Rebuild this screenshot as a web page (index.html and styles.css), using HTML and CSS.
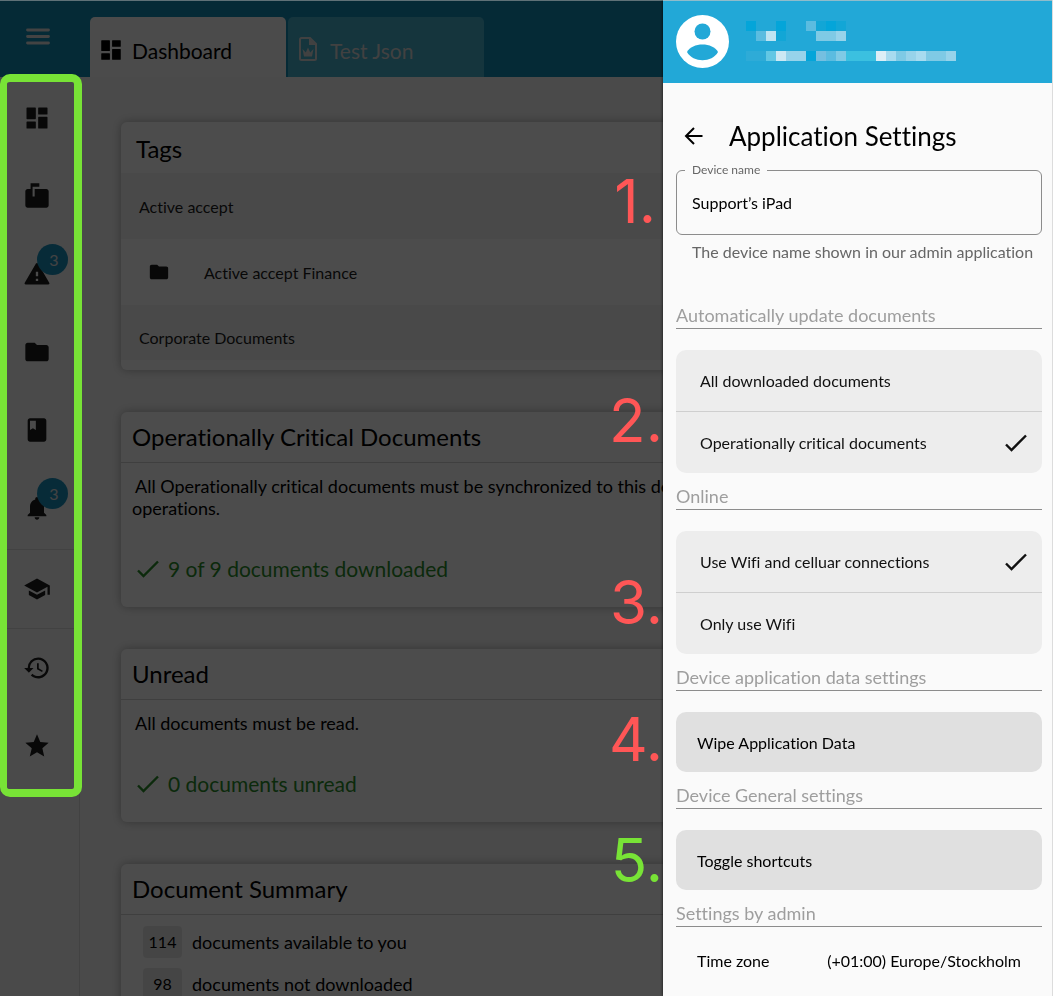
FILE: index.html
```html
<!DOCTYPE html>
<html lang="en">
<head>
    <meta charset="UTF-8">
    <meta name="viewport" content="width=device-width, initial-scale=1.0">
    <title>Application Settings</title>
    <link rel="stylesheet" href="styles.css">
</head>
<body>

    <!-- Shared icons -->
    <svg class="sprite" aria-hidden="true">
        <symbol id="dashboard" viewBox="0 0 24 24"><path d="M3.500 3h7q.5 0 .5.5v9q0 .5-.5.500h-7q-.5 0-.5-.5v-9q0-.5.5-.5zM3.500 15h7q.5 0 .5.5v5q0 .5-.5.500h-7q-.5 0-.5-.5v-5q0-.5.5-.5zM13.500 11h7q.5 0 .5.5v9q0 .5-.5.500h-7q-.5 0-.5-.5v-9q0-.5.5-.5zM13.500 3h7q.5 0 .5.5v5q0 .5-.5.500h-7q-.5 0-.5-.5v-5q0-.5.5-.5z"/></symbol>
        <symbol id="folder" viewBox="0 0 24 24"><path d="M10 4H4c-1.100 0-2 .9-2 2v12c0 1.100.9 2 2 2h16c1.100 0 2-.9 2-2V8c0-1.100-.9-2-2-2h-8l-2-2z"/></symbol>
        <symbol id="check" viewBox="0 0 24 24"><path d="M2 13.500l5.500 5.500L22 4.500" fill="none" stroke="currentColor" stroke-width="2.400"/></symbol>
    </svg>

    <div class="app">
        <header class="topbar">
            <button class="menu-btn" aria-label="Menu">
                <svg width="24" height="18" viewBox="0 0 24 18"><path d="M1.500 2h21M1.500 8.500h21M1.500 15h21" stroke="currentColor" stroke-width="2.800" stroke-linecap="round"/></svg>
            </button>
            <nav class="tabs">
                <button class="tab active"><svg width="26" height="26"><use href="#dashboard"/></svg>Dashboard</button>
                <button class="tab">
                    <svg width="26" height="28" viewBox="0 0 26 28"><path d="M5.500 2H14l6 6v14.500q0 1.500-1.500 1.500h-13Q4 24 4 22.500v-19Q4 2 5.500 2z" fill="none" stroke="currentColor" stroke-width="2"/><path d="M13 2v7h7zM6.500 13l3.300 3.500L12 11.500l2.200 5 3.300-3.500-1.500 7.500H8z"/></svg>
                    Test Json
                </button>
            </nav>
        </header>

        <aside class="sidebar">
            <div class="side-group first">
                <button class="side-btn" aria-label="Dashboard"><svg><use href="#dashboard"/></svg></button>
                <button class="side-btn" aria-label="Inbox"><svg viewBox="0 0 24 24"><path d="M20 6H10v6.500H8.200V4H14V1H6.500v5H4c-1.100 0-2 .9-2 2v12c0 1.100.9 2 2 2h16c1.100 0 2-.9 2-2V8c0-1.100-.9-2-2-2z"/></svg></button>
                <button class="side-btn" aria-label="Alerts"><svg viewBox="0 0 24 24"><path d="M2.300 21h19.400c.8 0 1.200-.8.8-1.500L12.900 3c-.4-.7-1.400-.7-1.800 0L1.500 19.500c-.4.7 0 1.500.8 1.500zM13 18h-2v-2h2v2zm0-4h-2v-4h2v4z"/></svg><span class="badge">3</span></button>
                <button class="side-btn" aria-label="Folders"><svg><use href="#folder"/></svg></button>
                <button class="side-btn" aria-label="Library"><svg viewBox="0 0 24 24"><path d="M18 2H6c-1.100 0-2 .9-2 2v16c0 1.100.9 2 2 2h12c1.100 0 2-.9 2-2V4c0-1.100-.9-2-2-2zM6 4h5v8l-2.500-1.500L6 12V4z"/></svg></button>
                <button class="side-btn" aria-label="Notifications"><svg viewBox="0 0 24 24"><path d="M12 22c1.100 0 2-.9 2-2h-4c0 1.100.9 2 2 2zm6-6v-5c0-3.100-1.600-5.600-4.500-6.300V4c0-.8-.7-1.500-1.500-1.500s-1.500.7-1.500 1.500v.7C7.600 5.400 6 7.900 6 11v5l-2 2v1h16v-1l-2-2z"/></svg><span class="badge">3</span></button>
            </div>
            <div class="side-group">
                <button class="side-btn" aria-label="Training"><svg viewBox="0 0 24 24"><path d="M5 13.200v4L12 21l7-3.800v-4L12 17l-7-3.800zM12 3L1 9l11 6 9-4.900V17h2V9L12 3z"/></svg></button>
            </div>
            <div class="side-group last">
                <button class="side-btn" aria-label="History"><svg viewBox="0 0 24 24"><path d="M13 3a9 9 0 0 0-9 9H1l3.900 3.900.1.100L9 12H6a7 7 0 1 1 2.100 4.900l-1.400 1.500A9 9 0 1 0 13 3zm-1 5v5l4.300 2.500.7-1.200-3.500-2.100V8z"/></svg></button>
                <button class="side-btn" aria-label="Favorites"><svg viewBox="0 0 24 24"><path d="M12 17.300l6.200 3.700-1.600-7L22 9.200l-7.200-.6L12 2 9.200 8.600 2 9.200 7.500 14l-1.700 7z"/></svg></button>
            </div>
            <div class="highlight"></div>
        </aside>

        <main class="content">
            <section class="card">
                <h2 class="card-title tags-title">Tags</h2>
                <ul class="tag-list">
                    <li class="shaded">Active accept</li>
                    <li class="child"><svg width="22" height="22"><use href="#folder"/></svg>Active accept Finance</li>
                    <li class="shaded">Corporate Documents</li>
                </ul>
            </section>

            <section class="card">
                <h2 class="card-title">Operationally Critical Documents</h2>
                <div class="card-body">
                    <p>All Operationally critical documents must be synchronized to this device before<br>operations.</p>
                    <div class="status"><svg width="24" height="24"><use href="#check"/></svg>9 of 9 documents downloaded</div>
                </div>
            </section>

            <section class="card">
                <h2 class="card-title">Unread</h2>
                <div class="card-body">
                    <p>All documents must be read.</p>
                    <div class="status"><svg width="24" height="24"><use href="#check"/></svg>0 documents unread</div>
                </div>
            </section>

            <section class="card">
                <h2 class="card-title">Document Summary</h2>
                <ul class="summary">
                    <li><span class="count">114</span>documents available to you</li>
                    <li><span class="count">98</span>documents not downloaded</li>
                </ul>
            </section>
        </main>
    </div>

    <div class="scrim"></div>

    <!-- Settings drawer -->
    <div class="drawer">
        <header class="user">
            <svg class="avatar" viewBox="0 0 53 53"><circle cx="26.500" cy="26.500" r="26.500" fill="#fff"/><circle cx="26.500" cy="16.500" r="8"/><path d="M11 37c5-10 26-10 31 0-6 11-25 11-31 0z"/></svg>
            <svg class="redacted" width="210" height="40" viewBox="0 0 21 4" shape-rendering="crispEdges" aria-hidden="true">
                <path fill="#04a5d9" d="M0 0h1v1H0zM3 0h1v1H3zM8 0h1v1H8zM6 3h1v1H6z"/>
                <path fill="#12a6d6" d="M7 0h1v1H7zM9 0h1v1H9zM3 1h1v1H3z"/>
                <path fill="#5bbce0" d="M6 0h1v1H6zM1 1h1v1H1zM8 3h1v1H8z"/>
                <path fill="#bfe4f2" d="M2 1h1v1H2z"/>
                <path fill="#7fcae5" d="M7 1h1v1H7zM8 1h1v1H8zM9 3h1v1H9zM15 3h1v1h-1zM18 3h2v1h-2z"/>
                <path fill="#97d3ea" d="M9 1h1v1H9zM4 3h2v1H4zM16 3h1v1h-1zM20 3h1v1h-1z"/>
                <path fill="#2eabd7" d="M0 3h2v1H0z"/>
                <path fill="#62c7e4" d="M2 3h1v1H2z"/>
                <path fill="#cde8f3" d="M3 3h1v1H3z"/>
                <path fill="#75bfe0" d="M7 3h1v1H7z"/>
                <path fill="#3bc0e0" d="M10 3h3v1h-3z"/>
                <path fill="#dceef6" d="M13 3h1v1h-1z"/>
                <path fill="#a8dbef" d="M14 3h1v1h-1zM17 3h1v1h-1z"/>
            </svg>
        </header>

        <form class="settings">
            <div class="heading">
                <button type="button" class="back-btn" aria-label="Back"><svg width="20" height="20" viewBox="0 0 20 20"><path d="M18.500 10h-16M10 2l-8 8 8 8" fill="none" stroke="currentColor" stroke-width="2"/></svg></button>
                <h1>Application Settings</h1>
            </div>

            <fieldset class="field">
                <legend><label for="deviceName">Device name</label></legend>
                <input type="text" id="deviceName" value="Support’s iPad">
            </fieldset>
            <p class="hint">The device name shown in our admin application</p>

            <h3>Automatically update documents</h3>
            <div class="options">
                <label><input type="radio" name="update">All downloaded documents<svg width="26" height="24"><use href="#check"/></svg></label>
                <label><input type="radio" name="update" checked>Operationally critical documents<svg width="26" height="24"><use href="#check"/></svg></label>
            </div>

            <h3>Online</h3>
            <div class="options">
                <label><input type="radio" name="online" checked>Use Wifi and celluar connections<svg width="26" height="24"><use href="#check"/></svg></label>
                <label><input type="radio" name="online">Only use Wifi<svg width="26" height="24"><use href="#check"/></svg></label>
            </div>

            <h3>Device application data settings</h3>
            <button type="button" class="action">Wipe Application Data</button>

            <h3>Device General settings</h3>
            <button type="button" class="action">Toggle shortcuts</button>

            <h3>Settings by admin</h3>
            <div class="info"><span>Time zone</span><span>(+01:00) Europe/Stockholm</span></div>
        </form>

        <!-- Step numbers beside the drawer -->
        <span class="step step-1">1.</span>
        <span class="step step-2">2.</span>
        <span class="step step-3">3.</span>
        <span class="step step-4">4.</span>
        <span class="step step-5">5.</span>
    </div>

</body>
</html>
```
FILE: styles.css
```css
/* Global Styles */
* {
    box-sizing: border-box;
}

body {
    margin: 0;
    height: 100vh;
    overflow: hidden;
    font-family: Lato, sans-serif;
    font-size: 16px;
    font-variant-ligatures: none;
    color: #000;
    background-color: #f8f8f8;
}

h1, h2, h3, p, ul {
    margin: 0;
    padding: 0;
    font-weight: 400;
}

ul {
    list-style: none;
}

button {
    font-family: inherit;
    font-variant-ligatures: inherit;
    color: inherit;
    background: none;
    border: none;
    padding: 0;
    cursor: pointer;
}

svg {
    fill: currentColor;
    flex-shrink: 0;
}

.sprite {
    position: absolute;
    width: 0;
    height: 0;
}

/* App Shell */
.app {
    display: grid;
    grid-template-columns: 80px 1fr;
    grid-template-rows: 77px 1fr;
    height: 100vh;
}

.topbar {
    grid-column: 1 / -1;
    display: flex;
    align-items: flex-end;
    background-color: #118cb4;
}

.menu-btn {
    width: 76px;
    height: 77px;
    color: #e0e0e0;
}

.tabs {
    display: flex;
    gap: 2px;
    padding-left: 14px;
}

.tab {
    display: flex;
    align-items: center;
    gap: 8px;
    width: 196px;
    height: 60px;
    padding: 6px 8px 0;
    border-radius: 5px 5px 0 0;
    font-size: 21px;
    color: #dadada;
    background-color: #46b1ce;
}

.tab.active {
    color: #000;
    background-color: #fbfbfb;
}

/* Sidebar */
.sidebar {
    position: relative;
    border-right: 1px solid #dedede;
}

.side-group {
    border-bottom: 1px solid #dcdcdc;
}

.side-group.first {
    padding: 2px 0;
}

.side-group.last {
    border-bottom: none;
}

.side-btn {
    position: relative;
    display: flex;
    align-items: center;
    justify-content: center;
    width: 74px;
    height: 78px;
    color: #1c1c1c;
}

.side-btn svg {
    width: 28px;
    height: 28px;
}

.badge {
    position: absolute;
    top: 9px;
    left: 37px;
    width: 31px;
    height: 31px;
    padding-left: 3px;
    border-radius: 50%;
    line-height: 32px;
    text-align: center;
    font-size: 16px;
    color: #e0e0e0;
    background-color: #1a90bd;
}

.highlight {
    position: absolute;
    z-index: 3;
    top: -3px;
    left: 0;
    width: 82px;
    height: 723px;
    border: 8px solid #78e336;
    border-left-width: 7px;
    border-radius: 10px;
    pointer-events: none;
}

/* Cards */
.content {
    display: flex;
    flex-direction: column;
    gap: 42px;
    padding: 45px 41px;
    overflow: hidden;
}

.card {
    flex-shrink: 0;
    border-radius: 6px;
    background-color: #fff;
    box-shadow: 0 0 10px rgba(0, 0, 0, 0.3);
}

.card-title {
    height: 51px;
    padding: 0 11px;
    border-bottom: 1px solid #d4d4d4;
    font-size: 24px;
    line-height: 50px;
}

.tags-title {
    padding: 2px 15px 0;
    border-bottom: none;
}

.tag-list {
    padding-bottom: 10px;
}

.tag-list li {
    display: flex;
    align-items: center;
    height: 66px;
    padding: 0 18px;
    color: #1c1c1c;
}

.tag-list li:last-child {
    height: 55px;
    padding-top: 10px;
}

.tag-list .child {
    gap: 34px;
    padding-left: 27px;
}

.tag-list .shaded {
    background-color: #f5f5f5;
}

.card-body {
    padding: 12px 11px 25px;
    font-size: 18px;
    line-height: 22px;
}

.card-body p {
    text-indent: 3px;
}

.status {
    display: flex;
    align-items: center;
    gap: 8px;
    margin-top: 37px;
    padding-left: 4px;
    font-size: 21px;
    line-height: 26px;
    color: #2a8c2a;
}

.summary {
    display: grid;
    gap: 10px;
    padding: 11px 22px;
    font-size: 18px;
}

.summary li {
    display: flex;
    align-items: center;
    gap: 10px;
}

.count {
    width: 39px;
    border-radius: 4px;
    line-height: 32px;
    text-align: center;
    font-size: 16px;
    background-color: #e8e8e8;
}

.scrim {
    position: fixed;
    inset: 0;
    z-index: 2;
    border-top: 1px solid #5f7177;
    background-color: rgba(0, 0, 0, 0.7);
}

/* Settings Drawer */
.drawer {
    position: fixed;
    top: 0;
    right: 0;
    bottom: 0;
    z-index: 4;
    width: 390px;
    border-right: 1px solid #dcdcdc;
    background-color: #fafafa;
    box-shadow: 0 0 3px rgba(0, 0, 0, 0.8);
}

.user {
    display: flex;
    align-items: center;
    gap: 17px;
    height: 83px;
    padding: 0 13px 2px;
    border-top: 1px solid #8fbccb;
    color: #22a8d7;
    background-color: #22a8d7;
}

.avatar {
    width: 53px;
    height: 53px;
}

.settings {
    padding: 32px 10px 0 13px;
}

.heading {
    display: flex;
    align-items: center;
    gap: 25px;
    height: 42px;
    padding-left: 8px;
}

.back-btn {
    display: flex;
    padding: 0;
}

h1 {
    font-size: 26px;
}

.field {
    height: 72px;
    margin: 6px 0 0;
    padding: 0 16px 0 8px;
    border: 1px solid #8c8c8c;
    border-radius: 6px;
}

.field legend {
    padding: 0 7px;
    font-size: 12px;
    line-height: 14px;
    color: #666;
}

.field input {
    width: 100%;
    height: 50px;
    padding: 0 7px;
    border: none;
    outline: none;
    font-family: inherit;
    font-size: 16px;
    background: none;
}

.hint {
    padding: 7px 0 0 16px;
    line-height: 20px;
    color: #666;
}

h3 {
    height: 37px;
    margin-bottom: 21px;
    border-bottom: 1px solid #8c8c8c;
    font-size: 18px;
    line-height: 46px;
    color: #9e9e9e;
}

.hint + h3 {
    margin-top: 30px;
}

.options {
    border-radius: 10px;
    background-color: #ededed;
}

.options label {
    display: flex;
    align-items: center;
    height: 61px;
    padding: 0 13px 0 24px;
    color: #111;
}

.options label + label {
    height: 62px;
    border-top: 1px solid #cfcfcf;
}

.options input {
    appearance: none;
    width: 0;
    margin: 0;
}

.options svg {
    display: none;
    margin-left: auto;
}

.options input:checked + svg {
    display: block;
}

.action {
    display: block;
    width: 100%;
    height: 60px;
    padding: 0 21px;
    border-radius: 10px;
    font-size: 16px;
    text-align: left;
    background-color: #e0e0e0;
}

.info {
    display: flex;
    justify-content: space-between;
    padding: 3px 21px;
    line-height: 20px;
}

/* Step Numbers */
.step {
    position: absolute;
    right: 100%;
    font-family: Inter, sans-serif;
    font-size: 60px;
    line-height: 60px;
    color: #ff5656;
}

.step-1 {
    top: 171px;
    padding-right: 7px;
}

.step-2 {
    top: 390px;
}

.step-3 {
    top: 572px;
}

.step-4 {
    top: 709px;
}

.step-5 {
    top: 830px;
    color: #78e336;
}
```
